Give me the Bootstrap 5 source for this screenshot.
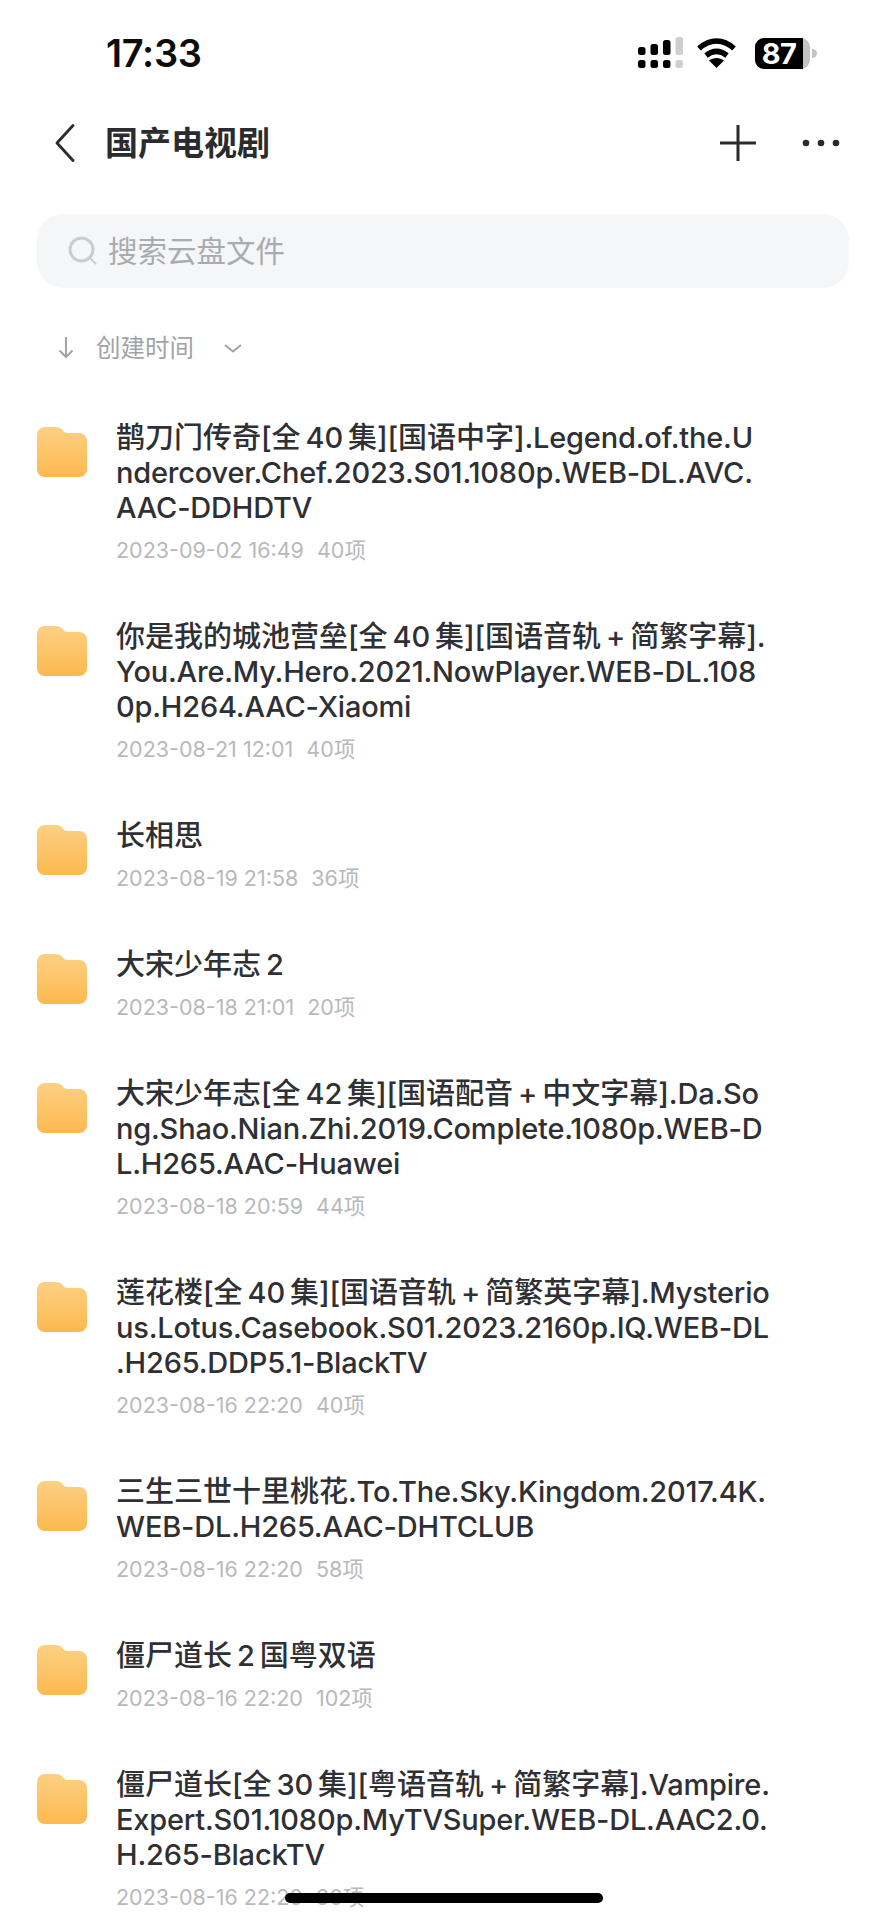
<!DOCTYPE html>
<html lang="zh-CN">
<head>
  <meta charset="UTF-8">
  <title>国产电视剧</title>
  <link href="https://cdn.jsdelivr.net/npm/bootstrap@5.3.0/dist/css/bootstrap.min.css" rel="stylesheet">
  <style>
    body { font-family: Inter, "Noto Sans CJK SC", sans-serif; background: #fff; height: 1920px; overflow: hidden; position: relative; }
    .status-bar { height: 106px; padding: 0 77px 0 106px; }
    .status-time { font-size: 38px; font-weight: 600; color: #0c0c0c; letter-spacing: -.3px; line-height: 1; }
    .battery-box { position: relative; width: 55px; height: 31px; margin-left: 17px; background: #c4c4c4; border-radius: 9px; }
    .battery-box::after { content: ""; position: absolute; left: 57px; top: 11px; width: 5px; height: 9px; background: #c4c4c4; border-radius: 0 5px 5px 0; }
    .battery-level { width: 48px; height: 31px; background: #000; border-radius: 9px 0 0 9px; color: #fff; font-size: 29px; font-weight: 700; line-height: 31px; text-align: center; letter-spacing: -.5px; }
    .nav-bar { height: 74px; padding: 0 47px 0 55px; }
    .nav-title { font-size: 33px; font-weight: 700; color: #2a2b2e; line-height: 1; margin-left: 30px; }
    .nav-more { margin-left: 45px; }
    .search-box { height: 74px; margin: 34px 38px 0 37px; padding-left: 31px; background: #f5f6f7; border-radius: 26px; color: #aaabae; font-size: 29.500px; }
    .search-icon { margin-right: 10px; }
    .sort-bar { height: 40px; margin-top: 40px; padding-left: 58px; color: #a2a3a7; font-size: 24.500px; }
    .sort-label { margin-left: 22px; }
    .sort-caret { margin-left: 30px; }
    .file-list { padding: 52px 0 0 37px; }
    .file-row { display: flex; gap: 29px; padding-bottom: 54px; }
    .folder-icon { flex: none; width: 50px; height: 50px; margin-top: 7px; }
    .file-name { font-size: 29px; font-weight: 500; line-height: 35px; color: #2f3034; white-space: nowrap; }
    .latin-run { letter-spacing: -.2px; }
    .file-meta { font-size: 21.500px; line-height: 30px; margin-top: 10px; color: #b8b9bb; white-space: nowrap; }
    .file-meta span { margin-left: 13px; }
    .home-bar { position: absolute; left: 285px; top: 1893px; width: 318px; height: 10px; border-radius: 5px; background: #000; }
  </style>
</head>
<body>
  <svg width="0" height="0" class="d-block">
    <defs>
      <linearGradient id="folderFill" x1="0" y1="0" x2="0" y2="1">
        <stop offset="0" stop-color="#fdd084"/>
        <stop offset="1" stop-color="#fdb94e"/>
      </linearGradient>
      <symbol id="folder" viewBox="0 0 50 50">
        <path d="M8 0h11c3 0 5 1 7 3.500c1.500 1.800 3 2.500 5 2.500h11c4.500 0 8 3.500 8 8v28c0 4.500-3.500 8-8 8H8c-4.500 0-8-3.500-8-8V8c0-4.500 3.500-8 8-8z" fill="url(#folderFill)"/>
      </symbol>
    </defs>
  </svg>

  <!-- barra de estado -->
  <div class="status-bar d-flex align-items-center justify-content-between">
    <div class="status-time">17:33</div>
    <div class="d-flex align-items-center">
      <svg width="100" height="32" viewBox="0 0 100 32">
        <g fill="#000">
          <rect x="0" y="10" width="7.500" height="8" rx="2.500"/><rect x="12.500" y="7" width="7.500" height="11" rx="2.500"/><rect x="25" y="3" width="7.500" height="15" rx="2.500"/>
          <rect x="0" y="23" width="7.500" height="8" rx="2.500"/><rect x="12.500" y="23" width="7.500" height="8" rx="2.500"/><rect x="25" y="23" width="7.500" height="8" rx="2.500"/>
        </g>
        <g fill="#cfcfcf"><rect x="37.500" y="0" width="7.500" height="18" rx="2.500"/><rect x="37.500" y="23" width="7.500" height="8" rx="2.500"/></g>
        <g fill="none" stroke="#000" stroke-width="5.500">
          <path d="M61 11.500c11-10 24-10 35 0"/>
          <path d="M68 18.500c7-5.500 14-5.500 21 0"/>
        </g>
        <path d="M71 23.500c4.500-3.500 10.500-3.500 15 0L78.500 31z" fill="#000"/>
      </svg>
      <div class="battery-box"><div class="battery-level">87</div></div>
    </div>
  </div>

  <!-- cabecera -->
  <div class="nav-bar d-flex align-items-center">
    <svg width="20" height="38" viewBox="0 0 20 38"><path d="M18 1.500L2 19l16 17.500" fill="none" stroke="#2a2b2e" stroke-width="2.800" stroke-linecap="round" stroke-linejoin="round"/></svg>
    <div class="nav-title flex-grow-1">国产电视剧</div>
    <svg width="38" height="38" viewBox="0 0 38 38"><path d="M19 1v36M1 19h36" stroke="#2a2b2e" stroke-width="3"/></svg>
    <svg class="nav-more" width="38" height="8" viewBox="0 0 38 8"><circle cx="4" cy="4" r="3.300" fill="#2a2b2e"/><circle cx="19" cy="4" r="3.300" fill="#2a2b2e"/><circle cx="34" cy="4" r="3.300" fill="#2a2b2e"/></svg>
  </div>

  <!-- buscador -->
  <div class="search-box d-flex align-items-center">
    <svg class="search-icon" width="30" height="30" viewBox="0 0 30 30"><circle cx="13.500" cy="13.500" r="11.500" fill="none" stroke="#cbccce" stroke-width="3"/><path d="M22 22l6 6" stroke="#cbccce" stroke-width="2"/></svg>
    <span>搜索云盘文件</span>
  </div>

  <!-- orden -->
  <div class="sort-bar d-flex align-items-center">
    <svg width="16" height="22" viewBox="0 0 16 22"><path d="M8 0v20M1.500 13.500L8 20l6.500-6.500" fill="none" stroke="#a2a3a7" stroke-width="2"/></svg>
    <span class="sort-label">创建时间</span>
    <svg class="sort-caret" width="18" height="9" viewBox="0 0 18 9"><path d="M1 1l8 6.500L17 1" fill="none" stroke="#a2a3a7" stroke-width="2"/></svg>
  </div>

  <!-- lista de carpetas -->
  <div class="file-list" id="lista"></div>

  <div class="home-bar"></div>

  <script>
    const archivos = [
      { lineas: ["鹊刀门传奇[全\u200940\u2009集][国语中字].Legend.of.the.U", "ndercover.Chef.2023.S01.1080p.WEB-DL.AVC.", "AAC-DDHDTV"], fecha: "2023-09-02 16:49", items: "40项" },
      { lineas: ["你是我的城池营垒[全\u200940\u2009集][国语音轨\u2009+\u2009简繁字幕].", "You.Are.My.Hero.2021.NowPlayer.WEB-DL.108", "0p.H264.AAC-Xiaomi"], fecha: "2023-08-21 12:01", items: "40项" },
      { lineas: ["长相思"], fecha: "2023-08-19 21:58", items: "36项" },
      { lineas: ["大宋少年志\u20092"], fecha: "2023-08-18 21:01", items: "20项" },
      { lineas: ["大宋少年志[全\u200942\u2009集][国语配音\u2009+\u2009中文字幕].Da.So", "ng.Shao.Nian.Zhi.2019.Complete.1080p.WEB-D", "L.H265.AAC-Huawei"], fecha: "2023-08-18 20:59", items: "44项" },
      { lineas: ["莲花楼[全\u200940\u2009集][国语音轨\u2009+\u2009简繁英字幕].Mysterio", "us.Lotus.Casebook.S01.2023.2160p.IQ.WEB-DL", ".H265.DDP5.1-BlackTV"], fecha: "2023-08-16 22:20", items: "40项" },
      { lineas: ["三生三世十里桃花.To.The.Sky.Kingdom.2017.4K.", "WEB-DL.H265.AAC-DHTCLUB"], fecha: "2023-08-16 22:20", items: "58项" },
      { lineas: ["僵尸道长\u20092\u2009国粤双语"], fecha: "2023-08-16 22:20", items: "102项" },
      { lineas: ["僵尸道长[全\u200930\u2009集][粤语音轨\u2009+\u2009简繁字幕].Vampire.", "Expert.S01.1080p.MyTVSuper.WEB-DL.AAC2.0.", "H.265-BlackTV"], fecha: "2023-08-16 22:20", items: "30项" }
    ];

    // el latin va un poco mas apretado que el chino
    const marcarLatin = t => t.replace(/[\x21-\x7e]+/g, m => `<span class="latin-run">${m}</span>`);

    const lista = document.getElementById("lista");
    archivos.forEach(a => {
      lista.innerHTML += `
        <div class="file-row">
          <svg class="folder-icon"><use href="#folder"/></svg>
          <div>
            <div class="file-name">${a.lineas.map(marcarLatin).join("<br>")}</div>
            <div class="file-meta">${a.fecha}<span>${a.items}</span></div>
          </div>
        </div>`;
    });
  </script>
  <script src="https://cdn.jsdelivr.net/npm/bootstrap@5.3.0/dist/js/bootstrap.bundle.min.js"></script>
</body>
</html>
